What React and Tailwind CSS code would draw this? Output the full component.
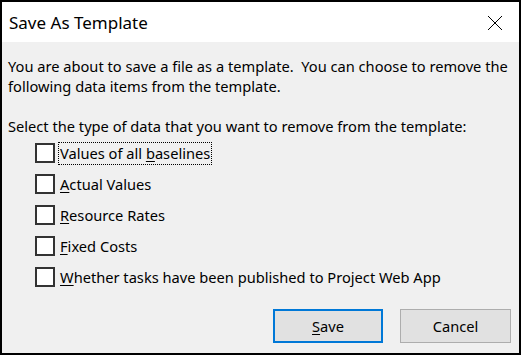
export default function App() {
  const options = [
    { pre: 'Values of all ', u: 'b', post: 'aselines', focus: true },
    { pre: '', u: 'A', post: 'ctual Values' },
    { pre: '', u: 'R', post: 'esource Rates' },
    { pre: '', u: 'F', post: 'ixed Costs' },
    { pre: '', u: 'W', post: 'hether tasks have been published to Project Web App' },
  ]

  return (
    <div
      className="w-[521px] h-[355px] border-2 border-black flex flex-col text-black bg-[#f0f0f0]"
      style={{ fontFamily: '"Segoe UI", "Noto Sans", sans-serif' }}
    >
      {/* Title bar */}
      <div className="h-[40px] bg-white flex items-center justify-between pl-[7px] pr-[16px] shrink-0">
        <span className="text-[17px] leading-none">Save As Template</span>
        <svg width="16" height="16" viewBox="0 0 16 16" className="mt-[1px]">
          <path d="M1 1 L15 15 M15 1 L1 15" stroke="#000" strokeWidth="1" />
        </svg>
      </div>

      {/* Body */}
      <div className="flex-1 flex flex-col pl-[6px] pt-[14px] text-[14.65px] leading-[20px]">
        <p className="whitespace-nowrap">
          You are about to save a file as a template.&nbsp; You can choose to remove the
          <br />
          following data items from the template.
        </p>
        <p className="mt-[20px]">Select the type of data that you want to remove from the template:</p>

        <div className="mt-[7px] ml-[27px] flex flex-col gap-[11px]">
          {options.map((o, i) => (
            <div key={i} className="flex items-center h-[20px]">
              <div className="w-[20px] h-[20px] border-2 border-[#333] bg-white shrink-0" />
              <span
                className={`ml-[3px] px-[1px] leading-[21px] border border-dotted ${
                  o.focus ? 'border-black' : 'border-transparent'
                }`}
              >
                {o.pre}
                <span className="underline underline-offset-2">{o.u}</span>
                {o.post}
              </span>
            </div>
          ))}
        </div>

        <div className="mt-auto flex justify-end gap-[17px] pr-[8px] pb-[10px]">
          <button className="w-[110px] h-[34px] bg-[#e1e1e1] border-2 border-[#0078d7]">
            <span className="underline underline-offset-2">S</span>ave
          </button>
          <button className="w-[111px] h-[34px] bg-[#e1e1e1] border border-[#adadad]">
            Cancel
          </button>
        </div>
      </div>
    </div>
  )
}
